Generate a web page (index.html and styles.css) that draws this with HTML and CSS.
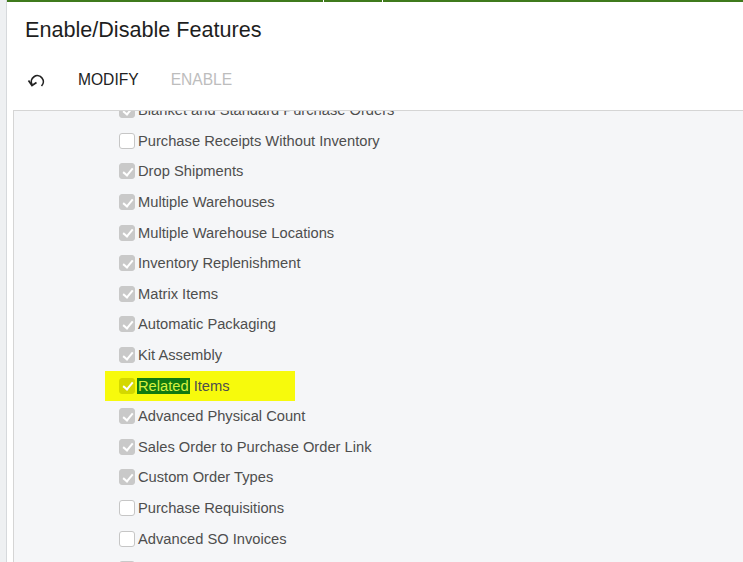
FILE: index.html
```html
<!DOCTYPE html>
<html>
<head>
<meta charset="utf-8">
<link rel="stylesheet" href="styles.css">
</head>
<body>
<div class="app">
  <div class="sidebar"></div>
  <div class="main">
    <div class="topline">
      <span class="seg seg1"></span><span class="seg seg2"></span><span class="seg seg3"></span>
    </div>
    <h1 class="title">Enable/Disable Features</h1>
    <div class="toolbar">
      <span class="undo">
        <svg width="20" height="18" viewBox="0 0 20 18"><path d="M5 13.5 A6 6 0 1 1 14.5 15" fill="none" stroke="#222" stroke-width="1.7"/><path d="M1.5 9.5 L5 14.5 L9.5 11.5" fill="none" stroke="#222" stroke-width="1.7"/></svg>
      </span>
      <span class="btn">MODIFY</span>
      <span class="btn disabled">ENABLE</span>
    </div>
    <div class="panel">
      <ul class="list">
        <li><span class="cb on"></span>Blanket and Standard Purchase Orders</li>
        <li><span class="cb"></span>Purchase Receipts Without Inventory</li>
        <li><span class="cb on"></span>Drop Shipments</li>
        <li><span class="cb on"></span>Multiple Warehouses</li>
        <li><span class="cb on"></span>Multiple Warehouse Locations</li>
        <li><span class="cb on"></span>Inventory Replenishment</li>
        <li><span class="cb on"></span>Matrix Items</li>
        <li><span class="cb on"></span>Automatic Packaging</li>
        <li><span class="cb on"></span>Kit Assembly</li>
        <li class="hl"><span class="cb on"></span><mark class="match">Related</mark>&nbsp;Items</li>
        <li><span class="cb on"></span>Advanced Physical Count</li>
        <li><span class="cb on"></span>Sales Order to Purchase Order Link</li>
        <li><span class="cb on"></span>Custom Order Types</li>
        <li><span class="cb"></span>Purchase Requisitions</li>
        <li><span class="cb"></span>Advanced SO Invoices</li>
        <li><span class="cb on"></span></li>
      </ul>
    </div>
  </div>
</div>
</body>
</html>
```

FILE: styles.css
```css
* { box-sizing: border-box; }
html, body { margin: 0; padding: 0; height: 100%; overflow: hidden; background: #fff; }
body { font-family: "Liberation Sans", Arial, sans-serif; }
.app { display: flex; height: 562px; }
.sidebar { width: 7px; background: #eef0f2; border-right: 1px solid #d6d9dc; flex: none; }
.main { flex: 1; display: flex; flex-direction: column; min-width: 0; }
.topline { height: 2px; display: flex; flex: none; }
.seg { height: 2px; background: #3f7a1c; display: block; }
.seg1 { width: 316px; }
.seg2 { width: 58px; margin-left: 1px; }
.seg3 { flex: 1; margin-left: 1px; }
.title { margin: 15px 0 0 18px; font-weight: normal; font-size: 21.6px; line-height: 26px; color: #1e1e1e; }
.toolbar { display: flex; align-items: center; margin: 23px 0 0 20px; height: 28px; }
.undo { width: 20px; height: 18px; display: flex; margin-right: 31px; }
.btn { font-size: 15.6px; color: #222; margin-right: 32px; }
.btn.disabled { color: #bdbdbd; }
.panel { margin: 16px 0 0 6px; border-top: 1px solid #d5d5d5; border-left: 1px solid #d5d5d5; background: #f5f6f8; flex: 1; overflow: hidden; }
.list { list-style: none; margin: -16px 0 0 0; padding: 0 0 0 105px; }
.list li { height: 30.6px; display: flex; align-items: center; font-size: 14.7px; color: #4e4e4e; white-space: nowrap; }
.list li.hl { background: #f7fa0c; width: 190px; margin-left: -14px; padding-left: 14px; height: 30px; margin-top: 0.3px; margin-bottom: 0.3px; }
.cb { width: 16px; height: 16px; border: 1px solid #c6c6c6; border-radius: 3px; background: #fff; margin-right: 3px; flex: none; position: relative; }
.cb.on { background: #c9c9c9; border-color: #c9c9c9; }
.cb.on::after { content: ""; position: absolute; left: 4.5px; top: 1.5px; width: 4px; height: 8px; border: solid #fff; border-width: 0 2px 2px 0; transform: rotate(40deg); }
.hl .cb.on { background: #d4d800; border-color: #d4d800; }
.match { background: #117a10; color: #d8f040; padding: 0 1px; margin-left: -1px; }
```
